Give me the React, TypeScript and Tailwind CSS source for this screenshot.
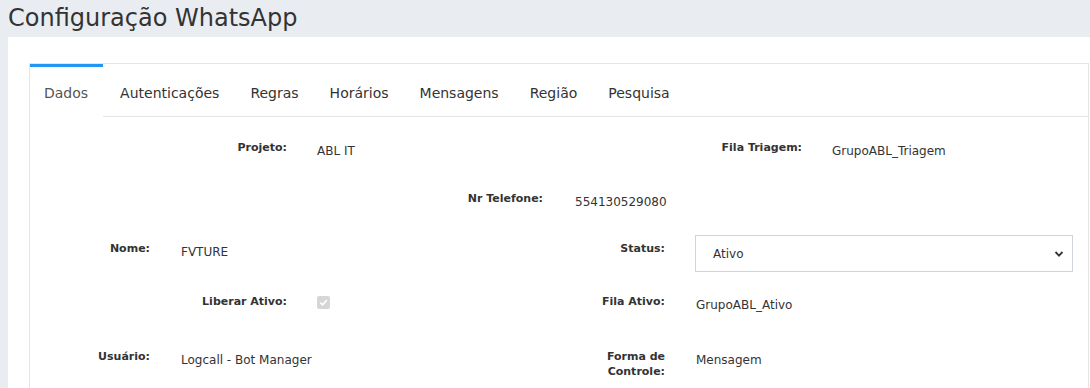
import type { ReactNode } from 'react'

const font = { fontFamily: '"DejaVu Sans", Verdana, sans-serif' }

const tabs = ['Dados', 'Autenticações', 'Regras', 'Horários', 'Mensagens', 'Região', 'Pesquisa']

function Label({ w, children }: { w: string; children: ReactNode }) {
  return <div className={`${w} shrink-0 text-right text-[11px] leading-[15px] font-bold text-[#333]`}>{children}</div>
}

function Value({ children, className = '' }: { children: ReactNode; className?: string }) {
  return <div className={`shrink-0 pt-[3px] text-[12px] leading-[16px] text-[#333] ${className}`}>{children}</div>
}

function DisabledCheck() {
  return (
    <div className="mt-[2px] flex h-[13px] w-[13px] items-center justify-center rounded-[2px] bg-[#d6d6d6]">
      <svg width="9" height="9" viewBox="0 0 10 10">
        <path d="M1.5 5.2 L4 7.6 L8.6 2.4" fill="none" stroke="#fff" strokeWidth="1.8" />
      </svg>
    </div>
  )
}

function StatusSelect() {
  return (
    <div className="-mt-[6px] flex h-[37px] w-[378px] items-center justify-between border border-[#cfd4da] bg-white pl-[17px] pr-[8px] text-[12px] text-[#333]">
      <span>Ativo</span>
      <svg width="10" height="8" viewBox="0 0 10 8">
        <path d="M1.5 2 L5 5.6 L8.5 2" fill="none" stroke="#333" strokeWidth="1.8" />
      </svg>
    </div>
  )
}

export default function App() {
  return (
    <div className="h-[388px] w-[1090px] overflow-hidden bg-[#e9edf2]" style={font}>
      <h1 className="h-[37px] pl-[8px] pt-[3px] text-[24px] leading-[30px] text-[#333]">Configuração WhatsApp</h1>

      <div className="ml-[8px] h-[351px] bg-white pl-[21px] pr-[1px] pt-[26px]">
        <div className="h-[330px] border-l border-r border-t border-[#e5e5e5]">
          {/* tab bar */}
          <div className="flex h-[53px]">
            {tabs.map((t, i) =>
              i === 0 ? (
                <div key={t} className="flex h-[53px] flex-col border-t-[3px] border-[#2196f3] pl-[14px] pr-[15px]">
                  <span className="pt-[17px] text-[14px] leading-[18px] text-[#555]">{t}</span>
                </div>
              ) : (
                <div key={t} className={`flex h-[53px] flex-col border-b border-[#e5e5e5] pt-[20px] ${i === 1 ? 'pl-[17px]' : 'pl-[16px]'} pr-[15px]`}>
                  <span className="text-[14px] leading-[18px] text-[#333]">{t}</span>
                </div>
              ),
            )}
            <div className="flex-1 border-b border-[#e5e5e5]" />
          </div>

          {/* form */}
          <div className="pt-[23px]">
            <div className="flex h-[51px]">
              <Label w="w-[257px]">Projeto:</Label>
              <Value className="ml-[30px] w-[228px]">ABL IT</Value>
              <Label w="w-[257px]">Fila Triagem:</Label>
              <Value className="ml-[30px]">GrupoABL_Triagem</Value>
            </div>

            <div className="flex h-[50px]">
              <Label w="w-[513px]">Nr Telefone:</Label>
              <Value className="ml-[32px]">554130529080</Value>
            </div>

            <div className="flex h-[53px]">
              <Label w="w-[120px]">Nome:</Label>
              <Value className="ml-[31px] w-[301px]">FVTURE</Value>
              <Label w="w-[183px]">Status:</Label>
              <div className="ml-[30px] shrink-0">
                <StatusSelect />
              </div>
            </div>

            <div className="flex h-[55px]">
              <Label w="w-[257px]">Liberar Ativo:</Label>
              <div className="ml-[30px] w-[213px] shrink-0">
                <DisabledCheck />
              </div>
              <Label w="w-[135px]">Fila Ativo:</Label>
              <Value className="ml-[31px]">GrupoABL_Ativo</Value>
            </div>

            <div className="flex">
              <Label w="w-[120px]">Usuário:</Label>
              <Value className="ml-[31px] w-[301px]">Logcall - Bot Manager</Value>
              <Label w="w-[183px]">
                Forma de
                <br />
                Controle:
              </Label>
              <Value className="ml-[31px]">Mensagem</Value>
            </div>
          </div>
        </div>
      </div>
    </div>
  )
}
